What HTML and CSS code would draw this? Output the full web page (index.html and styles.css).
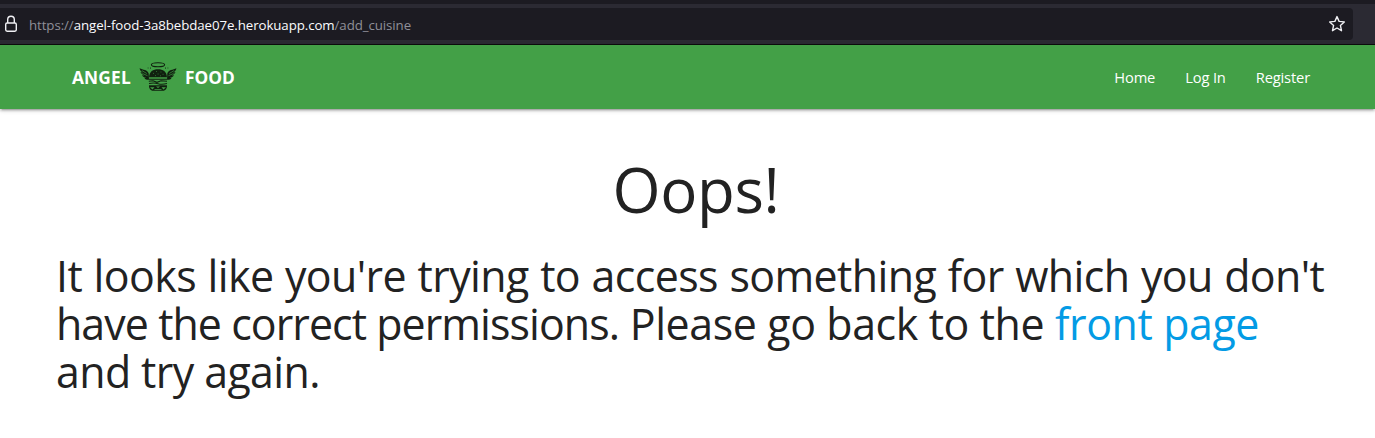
FILE: index.html
```html
<!DOCTYPE html>
<html lang="en">
<head>
<meta charset="utf-8">
<title>Angel Food</title>
<link rel="stylesheet" href="styles.css">
</head>
<body>
<div class="browser">
  <div class="address">
    <svg class="lock" width="14" height="18" viewBox="0 0 14 18" fill="none" stroke="#f0f0f4" stroke-width="1.4"><rect x="1.7" y="8" width="10.6" height="8.2" rx="1.4"/><path d="M3.7 8V4.6a3.3 3.3 0 0 1 6.600 0V8"/></svg>
    <span class="url">https://<span class="host">angel-food-3a8bebdae07e.herokuapp.com</span>/add_cuisine</span>
    <svg class="star" width="18" height="18" viewBox="0 0 18 18" fill="none" stroke="#f0f0f4" stroke-width="1.4" stroke-linejoin="round"><path d="M9 1.600l2.100 4.800 5.200.5-3.900 3.500 1.100 5.300L9 13l-4.500 2.700 1.100-5.300L1.700 6.900l5.200-.5z"/></svg>
  </div>
</div>
<nav class="nav">
  <a class="brand"><span class="word angel">ANGEL</span>
    <svg class="logo" width="38" height="32" viewBox="0 0 38 32" fill="#10200f">
      <ellipse cx="19" cy="3.800" rx="6.600" ry="2" fill="none" stroke="#10200f" stroke-width="1.100"/>
      <path d="M10 16.200C10.400 10.500 14 8.200 19 8.200s8.600 2.300 9 8z"/>
      <path d="M.6 7.200C4 9 8.500 8.500 9.700 12.500L10 18.800C8 19 6.300 18.300 5.500 17.200L7.200 16.800C4.800 16.500 3.500 15.500 3 14.300L5.500 14.500C3.200 13.600 1.800 12.300 1.600 11.100L4 11.700C2 10.400.8 9 .6 7.200zM37.400 7.200C34 9 29.500 8.500 28.300 12.500L28 18.800C30 19 31.700 18.300 32.500 17.200L30.800 16.800C33.200 16.500 34.500 15.500 35 14.300L32.500 14.500C34.800 13.600 36.200 12.300 36.400 11.100L34 11.700C36 10.400 37.200 9 37.400 7.200z"/>
      <path d="M2.800 9.500l5 3M3.500 12.500l5 2.200M35.200 9.500l-5 3M34.500 12.500l-5 2.200M14 12.400h.9M17 10.500h.9M18.600 13h.9M21.500 11h.9M23.600 13.300h.9M16 14.600h.9M21 14.800h.9" fill="none" stroke="#43a047" stroke-width=".65"/>
      <path d="M10 18.300h18M9.800 20.200l4.200-.4 4 1.500 4-1.500 6 .4M10 22.500q5-1 9 .2t9-.2" fill="none" stroke="#10200f" stroke-width="1.100"/>
      <path d="M10 24.200h18c.2 3-1.500 5.500-4 5.500H14c-2.500 0-4.200-2.500-4-5.500z"/>
      <path d="M11 26.300l2.500 2.200 2-2.200zM17 25.600h4l-2 1.300zM22.500 26.300l2 2.200 2.500-2.200zM15.500 28.200h7v.7h-7z" fill="#43a047"/>
      <path d="M11.500 6.500v1.200M26.500 6.500v1.200M8.700 7h.8M28.500 7h.8" stroke="#10200f" stroke-width=".8"/>
    </svg>
    <span class="word food">FOOD</span></a>
  <div class="links"><a class="home">Home</a><a class="login">Log In</a><a class="register">Register</a></div>
</nav>
<main class="content">
  <h1 class="title">Oops!</h1>
  <h3 class="message"><span class="line one">It looks like you're trying to access something for which you don't</span> <span class="line two"><span class="lead">have the correct permissions.</span> Please go back to the <a class="front">front page</a></span> <span class="line three">and try again.</span></h3>
</main>
</body>
</html>
```
FILE: styles.css
```css
body { margin: 0; min-height: 438px; background: #fff; color: #222; font-family: "Open Sans", "Noto Sans", sans-serif; }
.browser { box-sizing: border-box; height: 45px; padding: 4px 22px 0 0; background: linear-gradient(#1c1b22 4px, #2b2a33 4px, #2b2a33 44px, #0c0c0d 44px); }
.address { box-sizing: border-box; height: 32px; margin-top: 4px; padding: 0 7px 0 4px; display: flex; align-items: center; background: #1c1b22; border-radius: 0 4px 4px 0; }
.url { margin-left: 11px; padding-top: 2px; color: #8f8f98; font-size: 13.3px; letter-spacing: -0.09px; white-space: nowrap; }
.host { color: #fbfbfe; }
.star { margin-left: auto; }
.nav { position: relative; box-sizing: border-box; height: 64px; padding: 0 65px 0 72px; display: flex; align-items: center; justify-content: space-between; background: #43a047; color: #fff; box-shadow: 0 2px 2px 0 rgba(0,0,0,.14), 0 3px 1px -2px rgba(0,0,0,.12), 0 1px 5px 0 rgba(0,0,0,.2); }
.brand { display: flex; align-items: center; }
.word { font-size: 17.3px; font-weight: 700; white-space: nowrap; }
.angel { width: 67px; letter-spacing: 0.2px; }
.logo { margin-right: 8px; }
.links { display: flex; gap: 30px; font-size: 14.7px; letter-spacing: -0.15px; }
.content { padding: 1px 39px 40px 56px; }
.title { margin: 45px 0 27.7px; font-size: 61.8px; line-height: 69.3px; font-weight: 400; letter-spacing: -0.4px; text-align: center; }
.message { margin: 0; font-size: 42.9px; line-height: 48px; font-weight: 400; letter-spacing: -0.6px; }
.line { display: block; white-space: nowrap; }
.one { letter-spacing: -0.6px; word-spacing: 1px; }
.two { letter-spacing: -0.39px; }
.lead { letter-spacing: -0.93px; }
.front { color: #039be5; }
```
